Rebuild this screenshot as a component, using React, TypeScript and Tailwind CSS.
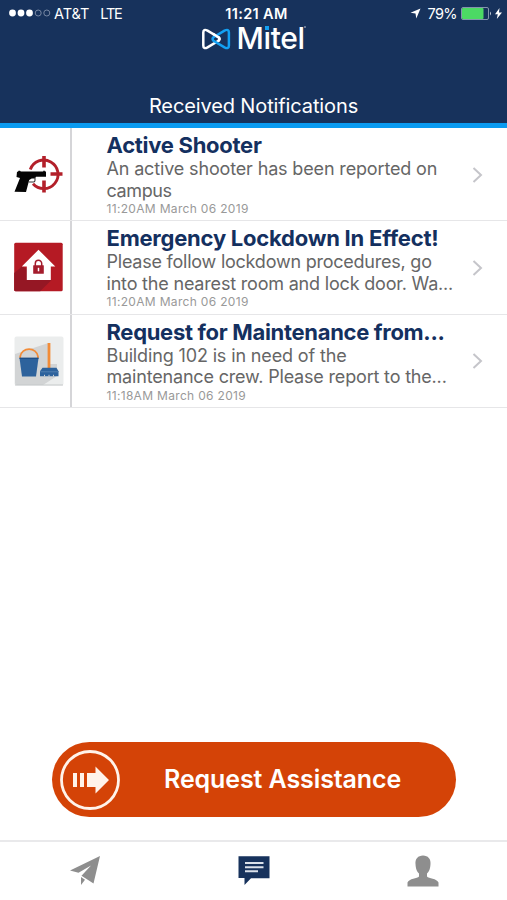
import type { ReactNode } from 'react';

type Notification = {
  title: string;
  titleClass: string;
  lines: { text: string; className: string }[];
  time: string;
  icon: ReactNode;
};

function ShooterIcon() {
  return (
    <svg width="50" height="50" viewBox="0 0 50 50" fill="none">
      <g stroke="#b3202a" strokeWidth="2.900">
        <path d="M16.300 20.500A14.300 14.300 0 1 1 19 34.800" />
        <path d="M30 7v11.500M30 31.500v12M36.500 25h12" strokeWidth="3.600" />
      </g>
      <path
        d="M3 22.700h1l.5-1h1.500l.8.700h22.500v-.7h1.500v.7h1.200v5.400h-10l-1.300 1.600-3 .1-2.500 1.500-3.200 12-11.500-.3 5.500-13.700-3.500-.9z"
        fill="#050505"
      />
      <path d="M14.800 33h4.700c1 0 1.500-.6 1.500-1.800v-3" stroke="#333" strokeWidth="1.100" />
    </svg>
  );
}

function LockdownIcon() {
  return (
    <svg width="50" height="50" viewBox="0 0 50 50" fill="none">
      <rect x="0.200" y="0.700" width="48.500" height="48.500" rx="1.500" fill="#b51a24" />
      <path d="M8 24.500L0.200 31v16.700q0 1.500 1.500 1.500h24.500L37.500 38z" fill="#951724" />
      <path d="M24.500 7.700L41.300 24.500H36.800V38H12.800V24.500H7.800z" fill="#fff" />
      <path d="M21.300 24v-2.500a3.200 3.200 0 0 1 6.400 0v2.500" stroke="#a41c2c" strokeWidth="1.500" />
      <rect x="19.200" y="23.300" width="10.600" height="8.500" rx="0.500" fill="#a41c2c" />
      <path d="M24.500 25.800v3.500" stroke="#fff" strokeWidth="1.500" />
    </svg>
  );
}

function MaintenanceIcon() {
  return (
    <svg width="50" height="50" viewBox="0 0 50 50" fill="none">
      <rect x="0.500" y="0.500" width="49" height="49" rx="2" fill="#ebeded" />
      <path d="M34.500 7L1 18v29Q1 49 3 49h26l14-9V28H36z" fill="#d2d4d5" />
      <path d="M1 49h48" stroke="#c5c8c9" strokeWidth="1" />
      <path d="M6.200 22v-1.500a9 8.700 0 0 1 17.800 0V22" stroke="#f28c38" strokeWidth="1.700" />
      <path d="M5.500 22h19l-2.500 18.500H8z" fill="#2d629c" />
      <path d="M5.500 22.300h19" stroke="#1f4f86" strokeWidth="1.400" />
      <path d="M35 7v25" stroke="#f28c38" strokeWidth="2.800" />
      <path d="M28.500 31.800h14l2 3.500v5h-18.500v-5z" fill="#2d629c" />
      <path d="M26.500 35.800h17.500" stroke="#5a86b4" strokeWidth="0.800" />
      <path d="M30.500 40.300v-1.500M35 40.300v-1.500M39.500 40.300v-1.500" stroke="#d2d4d5" strokeWidth="1" />
    </svg>
  );
}

const notifications: Notification[] = [
  {
    title: 'Active Shooter',
    titleClass: 'tracking-[-0.280px]',
    lines: [
      { text: 'An active shooter has been reported on', className: 'tracking-[-0.150px]' },
      { text: 'campus', className: 'tracking-[-0.400px]' },
    ],
    time: '11:20AM March 06 2019',
    icon: <ShooterIcon />,
  },
  {
    title: 'Emergency Lockdown In Effect!',
    titleClass: 'tracking-[-0.230px]',
    lines: [
      { text: 'Please follow lockdown procedures, go', className: 'tracking-[-0.230px]' },
      { text: 'into the nearest room and lock door. Wa...', className: 'tracking-[-0.190px]' },
    ],
    time: '11:20AM March 06 2019',
    icon: <LockdownIcon />,
  },
  {
    title: 'Request for Maintenance from...',
    titleClass: 'tracking-[-0.310px]',
    lines: [
      { text: 'Building 102 is in need of the', className: 'tracking-[-0.140px]' },
      { text: 'maintenance crew. Please report to the...', className: 'tracking-[-0.180px]' },
    ],
    time: '11:18AM March 06 2019',
    icon: <MaintenanceIcon />,
  },
];

function StatusBar() {
  return (
    <div className="grid grid-cols-3 items-center h-[27px] text-[14.500px]">
      <div className="flex items-center pl-[9px]">
        <svg width="42" height="9" viewBox="0 0 42 9" fill="none" className="mr-[3px]">
          <circle cx="3.500" cy="4" r="3.400" fill="#fff" />
          <circle cx="12" cy="4" r="3.400" fill="#fff" />
          <circle cx="20.500" cy="4" r="3.400" fill="#fff" />
          <circle cx="29.200" cy="4" r="3" stroke="#7788a4" />
          <circle cx="37.800" cy="4" r="3" stroke="#7788a4" />
        </svg>
        <span className="tracking-[-0.050px]">AT&amp;T</span>
        <span className="ml-[11px] tracking-[-1.200px]">LTE</span>
      </div>
      <div className="text-center font-semibold whitespace-nowrap pl-[6px] tracking-[0.350px]">11:21 AM</div>
      <div className="flex items-center justify-end pr-[5px]">
        <svg width="11" height="11" viewBox="0 0 11 11" className="mr-[7px]">
          <path d="M10.500 0.500L6.300 10.500 5.500 5.500 0.500 4.700z" fill="#fff" />
        </svg>
        <span className="mr-[4px] tracking-[-0.600px]">79%</span>
        <svg width="31" height="13" viewBox="0 0 31 13" fill="none" className="mr-[3px]">
          <rect x="0.500" y="0.500" width="27" height="12" rx="1.500" stroke="#8493ad" />
          <rect x="1" y="1" width="21.500" height="11" rx="1" fill="#4cd964" />
          <path d="M29 4.500q2 2 0 4z" fill="#c3cbd8" />
        </svg>
        <svg width="7" height="11" viewBox="0 0 7 11">
          <path d="M4.500 0L0 6.200h2.800L1.800 11 7 4.500H4z" fill="#fff" />
        </svg>
      </div>
    </div>
  );
}

function Logo() {
  return (
    <div className="flex items-center pl-[201px] h-[24px]">
      <svg width="30" height="22" viewBox="0 0 30 22" fill="none" strokeWidth="2.500" strokeLinejoin="round">
        <path d="M17.500 9.200Q19.300 11 17.500 12.800L6.500 19.400Q2.300 21.500 2.300 17.500V4.500Q2.300 .5 6.500 2.600z" stroke="#fff" />
        <path d="M12.500 9.200L23.500 2.600Q27.900 .5 27.900 4.500v13q0 4-4.400 1.900L12.500 12.800Q10.700 11 12.500 9.200z" stroke="#13a0f2" />
        <path d="M12 5.900l5.500 3.300Q19.300 11 17.500 12.800" stroke="#fff" />
      </svg>
      <span className="relative -mt-[2px] ml-[5.500px] text-[30px] font-medium leading-[24px] tracking-[-0.400px]">
        M
        <span className="relative">
          ı<span className="absolute left-[2px] top-[6px] w-[4px] h-[4px] bg-[#13a0f2]" />
        </span>
        tel
        <span className="absolute -right-[1px] top-0 w-[2px] h-[2px] rounded-full bg-[#8493ad]" />
      </span>
    </div>
  );
}

function NotificationRow({ item }: { item: Notification }) {
  return (
    <div className="flex h-[93.300px] border-b border-[#e6e6e8]">
      <div className="w-[72px] shrink-0 border-r-2 border-[#d5d5d8] pl-[13.500px] flex items-center">{item.icon}</div>
      <div className="pl-[34.500px] flex-1 whitespace-nowrap">
        <h2 className={`mt-[5px] h-[25px] text-[22px] leading-[25px] font-bold text-[#14305f] ${item.titleClass}`}>
          {item.title}
        </h2>
        {item.lines.map((line) => (
          <p key={line.text} className={`h-[21.500px] text-[18px] leading-[22px] text-[#666] ${line.className}`}>
            {line.text}
          </p>
        ))}
        <p className="text-[12px] leading-[15px] tracking-[0.320px] text-[#999]">{item.time}</p>
      </div>
      <svg width="11" height="16" viewBox="0 0 11 16" fill="none" className="shrink-0 self-center mt-[1px] mr-[24px]">
        <path d="M1.500 1l7.500 7-7.500 7" stroke="#c5c5ca" strokeWidth="2" />
      </svg>
    </div>
  );
}

export default function App() {
  return (
    <div className="w-[507px] h-[900px] flex flex-col overflow-hidden bg-white font-['Inter',sans-serif]">
      <header className="h-[128px] shrink-0 bg-[#17325c] border-b-[5px] border-[#0b9bf0] text-white">
        <StatusBar />
        <Logo />
        <h1 className="mt-[43px] text-center text-[20px] leading-[24px] tracking-[-0.120px]">Received Notifications</h1>
      </header>

      <main className="flex-1">
        {notifications.map((item) => (
          <NotificationRow key={item.title} item={item} />
        ))}
      </main>

      <button className="mx-[52px] mb-[23px] h-[75px] w-[404px] shrink-0 rounded-full bg-[#d44307] text-white flex items-center pl-[8px]">
        <svg width="60" height="60" viewBox="0 0 60 60" fill="none">
          <circle cx="30" cy="30" r="28.500" stroke="#fff3ea" strokeWidth="2.800" />
          <path d="M13 23h4v14h-4zM20 23h4v14h-4zM27 23h8.500v-6.500L49 30 35.500 43.500V37H27z" fill="#fff3ea" />
        </svg>
        <span className="ml-[44px] text-[25px] font-semibold whitespace-nowrap tracking-[-0.100px]">Request Assistance</span>
      </button>

      <nav className="h-[60px] shrink-0 border-t-2 border-[#e9e9eb] grid grid-cols-3 justify-items-center">
        <svg width="32" height="30" viewBox="0 0 32 30" fill="#8e8e8e" className="mt-[14px]">
          <path d="M31 0L1 14.500l8.500 2.300L22 9.500 12.500 19.800 24.500 27.500zM12 21v8l4-5.300z" />
        </svg>
        <svg width="32" height="30" viewBox="0 0 32 30" className="mt-[14px]">
          <path d="M0.500 0.200h31v22H13L6.500 29v-7h-6z" fill="#17325c" />
          <path d="M7 7h18.500M7 11.200h18.500M7 15.200h13" stroke="#dbe1ea" strokeWidth="2" />
        </svg>
        <svg width="32" height="32" viewBox="0 0 32 32" fill="#8e8e8e" className="mt-[13px]">
          <path d="M16 0.500c5 0 8 3.500 7.500 8.500-.2 5-1.500 7.500-3.500 9.500v3c1.500 2 10 2 11.500 6v4H0.500v-4C2 23.500 10.500 23.500 12 21.500v-3C10 16.500 8.700 14 8.500 9 8 4 11 .5 16 .5z" />
        </svg>
      </nav>
    </div>
  );
}
